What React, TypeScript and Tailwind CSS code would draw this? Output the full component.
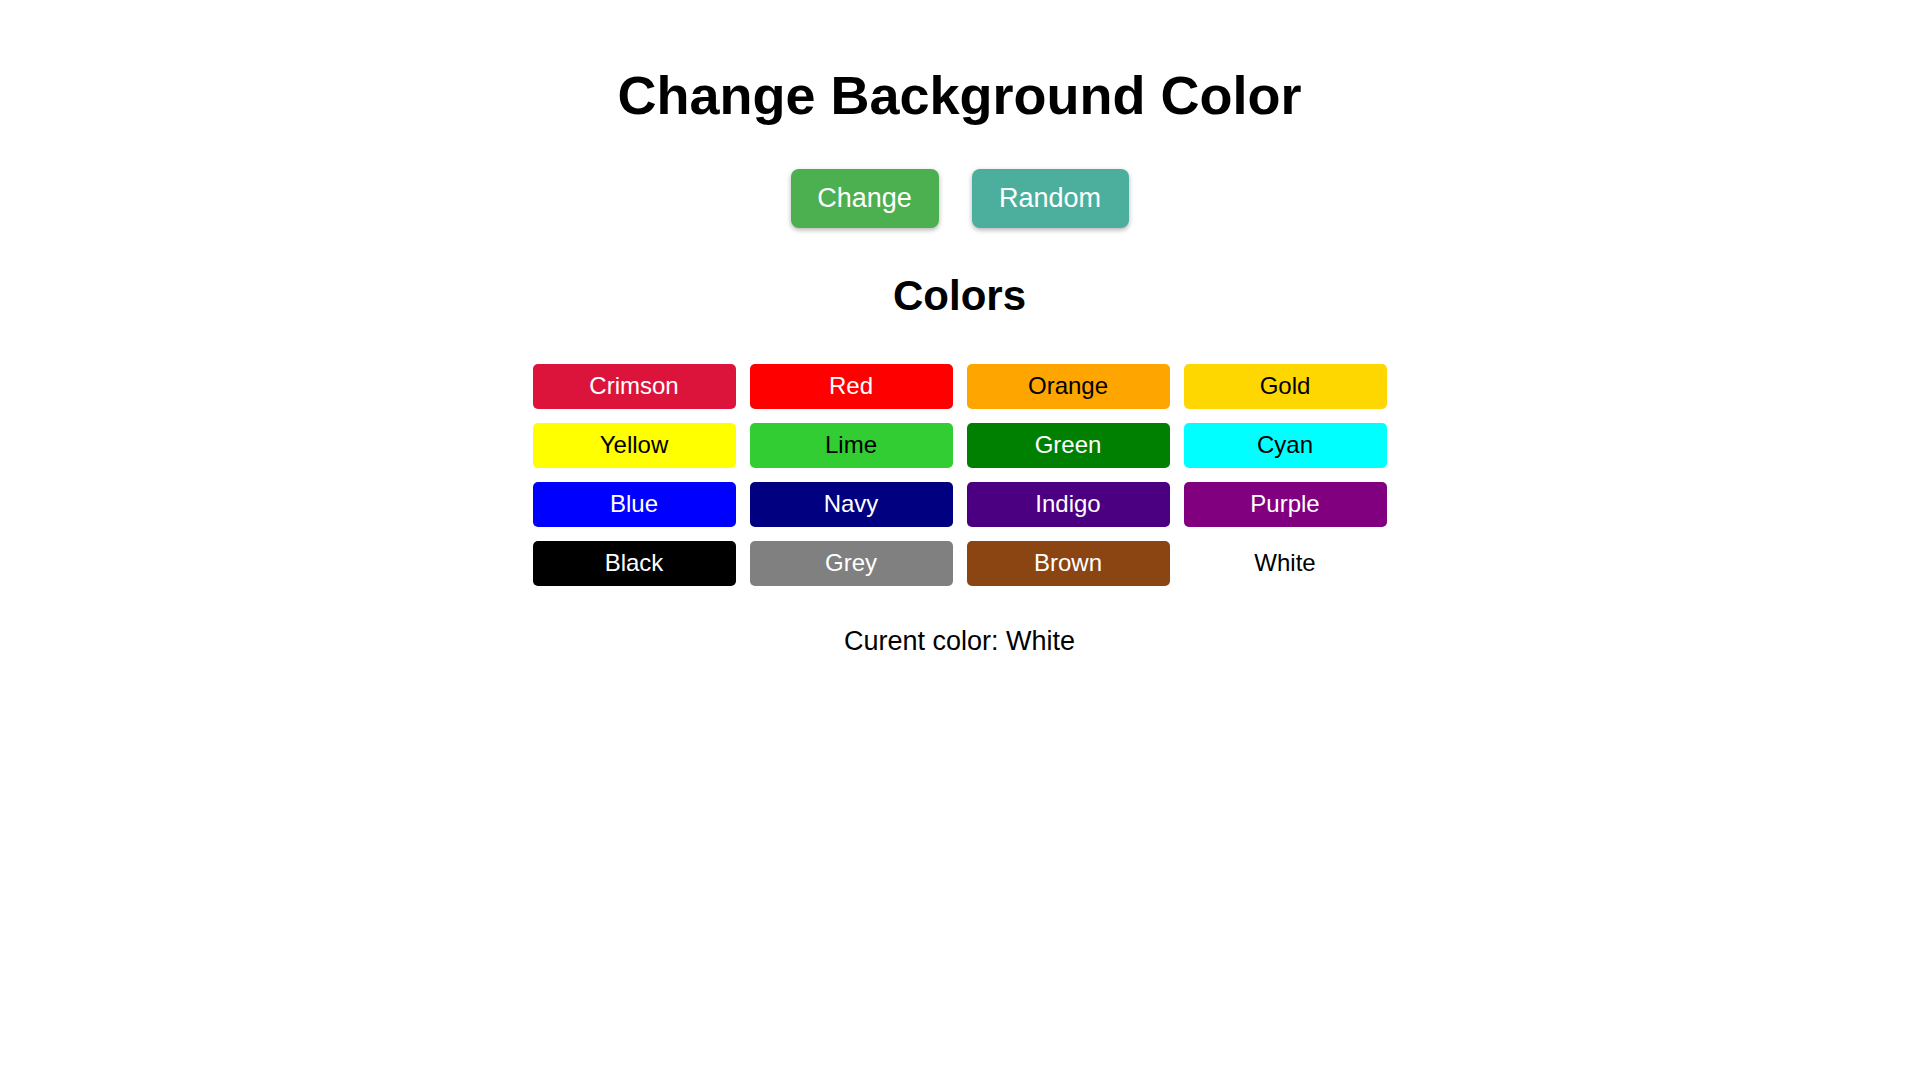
import React from "react";

const colors: { name: string; bg: string; fg: string }[] = [
  { name: "Crimson", bg: "bg-[#dc143c]", fg: "text-white" },
  { name: "Red", bg: "bg-[#ff0000]", fg: "text-white" },
  { name: "Orange", bg: "bg-[#ffa500]", fg: "text-black" },
  { name: "Gold", bg: "bg-[#ffd700]", fg: "text-black" },
  { name: "Yellow", bg: "bg-[#ffff00]", fg: "text-black" },
  { name: "Lime", bg: "bg-[#32cd32]", fg: "text-black" },
  { name: "Green", bg: "bg-[#008000]", fg: "text-white" },
  { name: "Cyan", bg: "bg-[#00ffff]", fg: "text-black" },
  { name: "Blue", bg: "bg-[#0000ff]", fg: "text-white" },
  { name: "Navy", bg: "bg-[#000080]", fg: "text-white" },
  { name: "Indigo", bg: "bg-[#4b0082]", fg: "text-white" },
  { name: "Purple", bg: "bg-[#800080]", fg: "text-white" },
  { name: "Black", bg: "bg-[#000000]", fg: "text-white" },
  { name: "Grey", bg: "bg-[#808080]", fg: "text-white" },
  { name: "Brown", bg: "bg-[#8b4513]", fg: "text-white" },
  { name: "White", bg: "bg-white", fg: "text-black" },
];

export default function App() {
  return (
    <div className="min-h-screen bg-white flex flex-col items-center font-['Liberation_Sans',Arial,sans-serif] text-[27px] text-black">
      <h1 className="mt-[64px] text-[54px] font-bold leading-[62px]">Change Background Color</h1>
      <div className="mt-[43px] flex gap-[33px]">
        <button className="h-[59px] w-[148px] rounded-[8px] bg-[#4caf50] text-white text-[27px] leading-[31px] shadow-[0_2px_5px_rgba(0,0,0,0.3)]">
          Change
        </button>
        <button className="h-[59px] w-[157px] rounded-[8px] bg-[#4caf9e] text-white text-[27px] leading-[31px] shadow-[0_2px_5px_rgba(0,0,0,0.3)]">
          Random
        </button>
      </div>
      <h2 className="mt-[44px] text-[42px] font-bold leading-[48px]">Colors</h2>
      <div className="mt-[43.5px] grid grid-cols-[repeat(4,203px)] gap-[14px]">
        {colors.map((c) => (
          <div
            key={c.name}
            className={`h-[45px] rounded-[5px] flex items-center justify-center text-[24px] leading-[28px] ${c.bg} ${c.fg}`}
          >
            {c.name}
          </div>
        ))}
      </div>
      <p className="mt-[40.5px] leading-[31px]">Curent color: White</p>
    </div>
  );
}
